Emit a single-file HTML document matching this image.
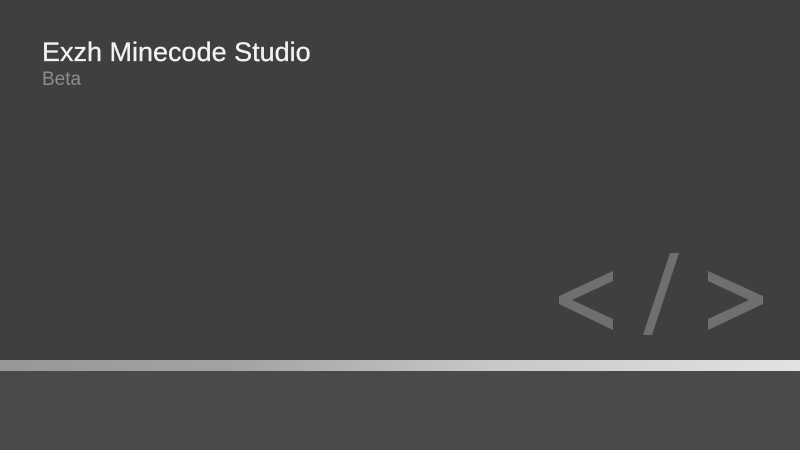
<!DOCTYPE html>
<html><head><meta charset="utf-8"><style>
html,body{margin:0;padding:0}
body{width:800px;height:450px;position:relative;overflow:hidden;background:#3f3f3f;font-family:"Liberation Sans",sans-serif}
.t{position:absolute;left:42px;top:36px;color:#f2f2f2;font-size:27px;letter-spacing:0px;line-height:32px;-webkit-text-stroke:0.3px #f2f2f2}
.b{position:absolute;left:42px;top:68px;color:#8c8c8c;font-size:19px;line-height:24px}
.bar{position:absolute;left:0;top:360px;width:800px;height:11px;background:linear-gradient(90deg,#979797,#a3a3a3 30%,#c6c6c6 60%,#e2e2e2)}
.bot{position:absolute;left:0;top:371px;width:800px;height:79px;background:#4a4a4a}
svg{position:absolute;left:0;top:0}
</style></head><body>
<div class="t">Exzh Minecode Studio</div>
<div class="b">Beta</div>
<svg width="800" height="450">
<g fill="#6f6f6f">
<polygon points="613,271 613,281 572,300 613,319 613,330 559,304 559,296"/>
<polygon points="670,253 679,253 652,335 643,335"/>
<polygon points="708,271 763,296 763,304 708,330 708,319 749,300 708,281"/>
</g>
</svg>
<div class="bar"></div>
<div class="bot"></div>
</body></html>
